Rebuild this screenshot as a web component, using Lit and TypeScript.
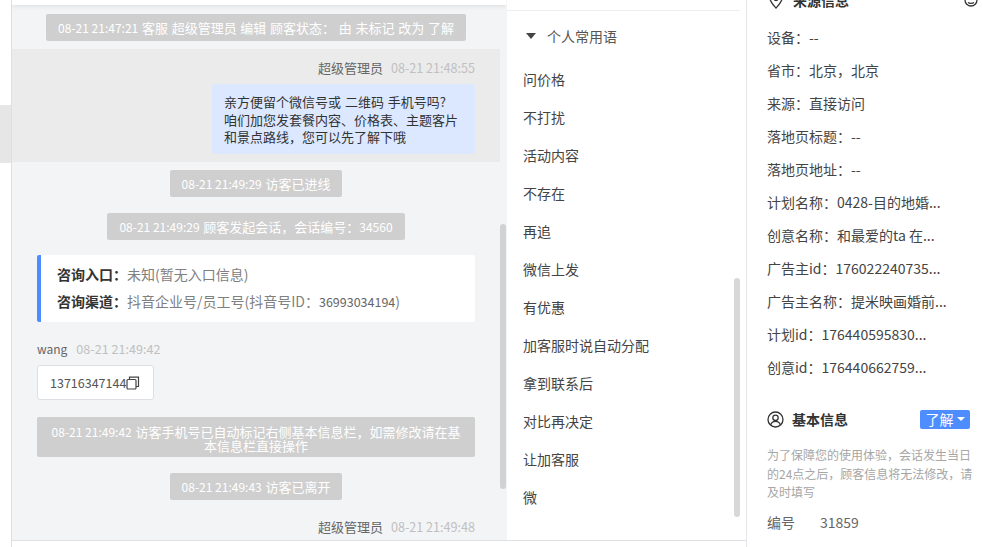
import { LitElement, html, css } from "lit";
import { customElement } from "lit/decorators.js";

const phrases = ["问价格","不打扰","活动内容","不存在","再追","微信上发","有优惠","加客服时说自动分配","拿到联系后","对比再决定","让加客服","微"];
const fields: [string,string][] = [["设备","--"],["省市","北京，北京"],["来源","直接访问"],["落地页标题","--"],["落地页地址","--"],["计划名称","0428-目的地婚..."],["创意名称","和最爱的ta 在..."],["广告主id","176022240735..."],["广告主名称","提米映画婚前..."],["计划id","176440595830..."],["创意id","176440662759..."]];

@customElement("app-root")
export class AppRoot extends LitElement {
  static styles = css`
    :host { display: block; width: 983px; height: 547px; overflow: hidden; position: relative; background: #fff;
      font-family: "Noto Sans CJK SC", "Liberation Sans", sans-serif; font-size: 13px; color: #333; }
    .app { display: flex; height: 547px; }
    .rail { width: 11px; flex: none; padding-top: 105px; border-right: 1px solid #dcdfe3; box-sizing: content-box; }
    .rail div { height: 58px; background: #e6e6e6; }
    .work { width: 734px; flex: none; display: flex; flex-direction: column; border-right: 1px solid #e4e6ea; }
    .panes { display: flex; height: 540px; border-bottom: 1px solid #dfe1e5; flex: none; }
    .chat { width: 494px; flex: none; background: #f3f4f6; position: relative; overflow: hidden; box-sizing: border-box; }
    .topbar { height: 5px; background: #fff; box-shadow: 0 1px 5px rgba(0,0,0,.1); }
    .scroll { width: 488px; }
    .thumb { position: absolute; background: #d2d2d2; border-radius: 3px; width: 6px; right: 0; top: 224px; height: 265px; }
    .sys { background: #cfcfcf; color: #fff; border-radius: 2px; padding: 0 12px; line-height: 27px; height: 27px; font-size: 13px; word-spacing: .8px; white-space: nowrap; width: max-content; margin: 0 auto; }
    .sys .n { font-size: 12px; word-spacing: 0; }
    .s1 { margin-top: 9px; }
    .s2 { margin-top: 8px; }
    .s3 { margin-top: 16px; }
    .s5 { margin-top: 16px; }
    .sys.multi { white-space: normal; width: auto; line-height: 13.5px; padding: 8px 12px 0; text-align: center; margin: 17px 25px 0; height: 40px; box-sizing: border-box; }
    .out { background: #ebebeb; margin-top: 8px; height: 113px; padding: 10px 25px 0; box-sizing: border-box; display: flex; flex-direction: column; align-items: flex-end; }
    .meta { height: 18px; line-height: 18px; white-space: nowrap; color: #666; }
    .meta span { color: #c0c0c0; font-size: 12.6px; margin-left: 8px; }
    .bubble { margin-top: 7px; width: 263px; height: 70px; box-sizing: border-box; background: #dce8ff; border-radius: 4px; padding: 9px 12px; line-height: 17.5px; color: #333; white-space: nowrap; word-spacing: 1px; }
    .info { margin: 15px 25px 0; height: 67px; box-sizing: border-box; background: #fff; border-left: 4px solid #4d8dff; border-radius: 2px; padding: 6px 16px; font-size: 14px; line-height: 27px; color: #808080; white-space: nowrap; }
    .info b { color: #333; font-weight: 700; }
    .info .n { font-size: 12.5px; color: #666; }
    .left { margin: 18px 25px 0; font-size: 12px; }
    .left span { margin-left: 9px; }
    .phone { margin: 7px 25px 0; width: 117px; height: 35px; box-sizing: border-box; background: #fff; border: 1px solid #dcdfe3; border-radius: 3px; display: flex; align-items: center; padding-left: 12px; font-size: 12.5px; color: #555; white-space: nowrap; }
    .phone svg { flex: none; }
    .foot { display: flex; justify-content: flex-end; margin: 18px 25px 0; }
    .mid { width: 240px; flex: none; position: relative; background: #fff; border-left: 1px solid #f3f4f6; box-sizing: border-box; padding-top: 10px; overflow: hidden; }
    .midhead { border-top: 1px solid #eceef0; height: 50px; display: flex; align-items: center; margin-right: 6px; padding-left: 19px; gap: 11px; font-size: 14px; color: #555; box-sizing: border-box; }
    .tri { width: 0; height: 0; border: 5px solid transparent; border-top: 6px solid #444; border-bottom: 0; }
    .phrase { height: 38px; line-height: 38px; padding-left: 16px; font-size: 14px; color: #444; white-space: nowrap; }
    .midthumb { position: absolute; right: 6px; top: 278px; width: 6px; height: 239px; border-radius: 3px; background: #d8d8d8; }
    .right { width: 236px; flex: none; overflow: hidden; padding: 0 13px 0 20px; box-sizing: border-box; font-size: 14px; }
    .rhead { margin-top: -11px; height: 22px; display: flex; align-items: center; font-weight: 700; color: #333; }
    .rhead svg { flex: none; }
    .rhead .pin { margin-left: 2px; }
    .rhead .t { margin-left: 10px; }
    .rhead .end { margin-left: auto; margin-right: -8px; }
    .row { height: 33px; line-height: 33px; white-space: nowrap; color: #444; }
    .rows { margin-top: 10px; }
    .basic { margin-top: 25px; height: 20px; display: flex; align-items: center; font-weight: 700; color: #333; }
    .basic .t { margin-left: 8px; }
    .btn { margin-left: auto; width: 50px; height: 19px; background: #4d8dff; border-radius: 2px; color: #fff; font-weight: 400; display: flex; align-items: center; justify-content: center; gap: 3px; font-size: 14px; }
    .btn i { width: 0; height: 0; border: 4px solid transparent; border-top: 4px solid #fff; border-bottom: 0; }
    .desc { margin: 17px -4px 0 0; font-size: 12px; line-height: 18.5px; color: #a6a6a6; }
    .num { margin-top: 10px; display: flex; height: 20px; line-height: 20px; color: #666; }
    .num span:first-child { width: 53px; }
  `;

  render() {
    return html`<div class="app">
      <div class="rail"><div></div></div>
      <div class="work">
        <div class="panes">
          <div class="chat">
            <div class="topbar"></div>
            <div class="scroll">
              <div class="sys s1"><span class="n">08-21 21:47:21</span> 客服 超级管理员 编辑 顾客状态： 由 未标记 改为 了解</div>
              <div class="out">
                <div class="meta">超级管理员<span>08-21 21:48:55</span></div>
                <div class="bubble">亲方便留个微信号或 二维码 手机号吗?<br>咱们加您发套餐内容、价格表、主题客片<br>和景点路线，您可以先了解下哦</div>
              </div>
              <div class="sys s2"><span class="n">08-21 21:49:29</span> 访客已进线</div>
              <div class="sys s3"><span class="n">08-21 21:49:29</span> 顾客发起会话，会话编号：<span class="n">34560</span></div>
              <div class="info"><div><b>咨询入口：</b>未知(暂无入口信息)</div><div><b>咨询渠道：</b>抖音企业号/员工号(抖音号ID：<span class="n">36993034194</span>)</div></div>
              <div class="meta left">wang<span>08-21 21:49:42</span></div>
              <div class="phone">13716347144<svg width="14" height="14" viewBox="0 0 14 14" fill="none" stroke="#444" stroke-width="1.2"><rect x="1" y="3.5" width="9" height="9.5" rx="1"/><path d="M3.5 3.5V1.2h9v9.3H10"/></svg></div>
              <div class="sys multi"><span class="n">08-21 21:49:42</span> 访客手机号已自动标记右侧基本信息栏，如需修改请在基本信息栏直接操作</div>
              <div class="sys s5"><span class="n">08-21 21:49:43</span> 访客已离开</div>
              <div class="foot"><div class="meta">超级管理员<span>08-21 21:49:48</span></div></div>
            </div>
            <div class="thumb"></div>
          </div>
          <div class="mid">
            <div class="midhead"><div class="tri"></div>个人常用语</div>
            ${phrases.map(p => html`<div class="phrase">${p}</div>`)}
            <div class="midthumb"></div>
          </div>
        </div>
      </div>
      <div class="right">
        <div class="rhead">
          <svg class="pin" width="14" height="17" viewBox="0 0 14 17" fill="none" stroke="#333" stroke-width="1.3"><path d="M7 16C3.5 12 1 9.5 1 6.5a6 6 0 0 1 12 0C13 9.5 10.500 12 7 16z"/><circle cx="7" cy="6.500" r="2"/></svg>
          <span class="t">来源信息</span>
          <svg class="end" width="14" height="14" viewBox="0 0 14 14" fill="none" stroke="#333" stroke-width="1.3"><circle cx="7" cy="7" r="6"/><path d="M4 9.500c1.500 1.200 4.500 1.200 6 0"/></svg>
        </div>
        <div class="rows">${fields.map(([k,v]) => html`<div class="row">${k}：${v}</div>`)}</div>
        <div class="basic">
          <svg width="17" height="17" viewBox="0 0 17 17" fill="none" stroke="#333" stroke-width="1.3"><circle cx="8.500" cy="8.500" r="7.500"/><circle cx="8.500" cy="6.800" r="2.700"/><path d="M3.600 14c.8-2.600 2.700-3.700 4.900-3.700s4.100 1.100 4.900 3.700"/></svg>
          <span class="t">基本信息</span>
          <div class="btn">了解<i></i></div>
        </div>
        <div class="desc">为了保障您的使用体验，会话发生当日的24点之后，顾客信息将无法修改，请及时填写</div>
        <div class="num"><span>编号</span><span>31859</span></div>
      </div>
    </div>`;
  }
}
